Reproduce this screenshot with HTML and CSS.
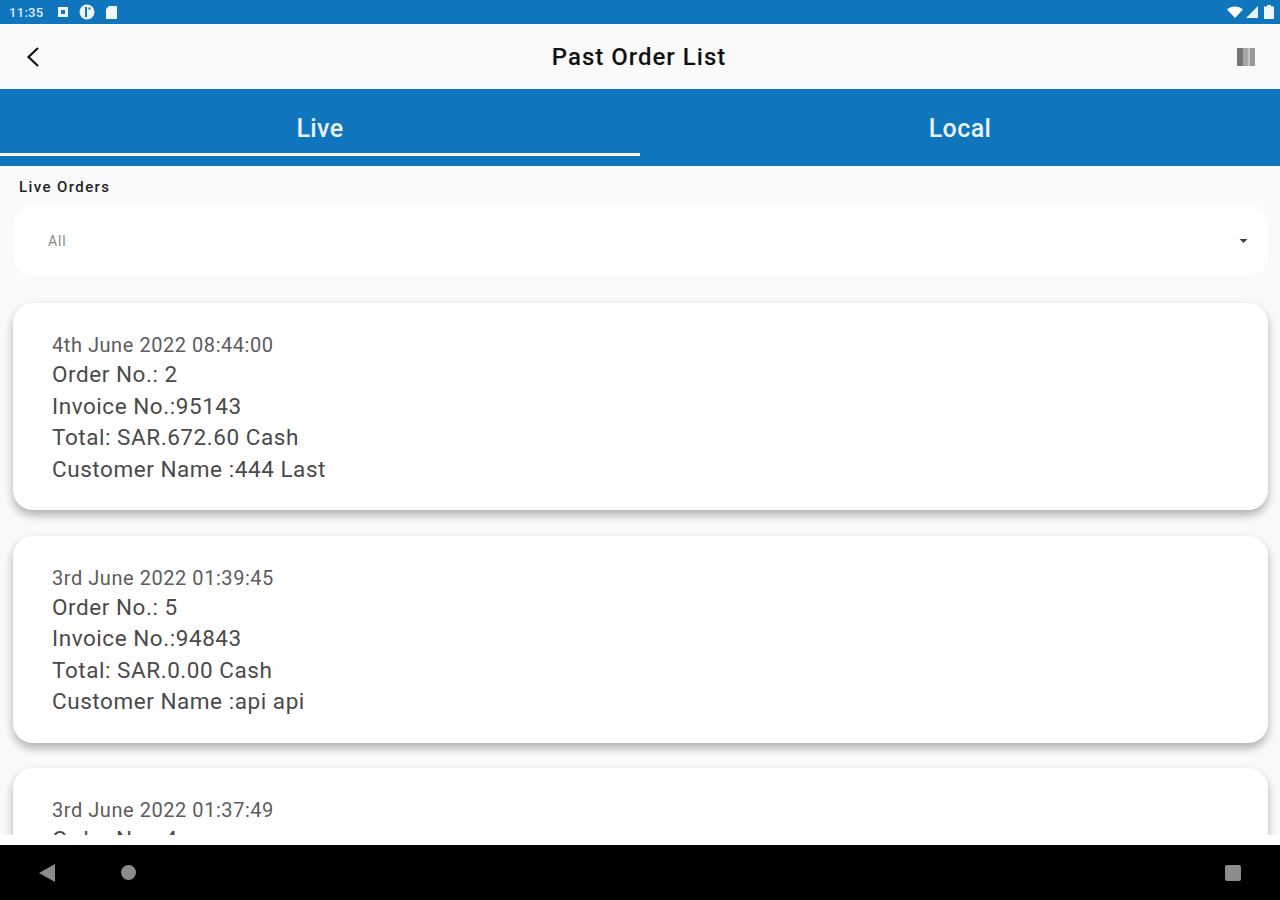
FILE: index.html
```html
<!DOCTYPE html>
<html lang="en">
<head>
    <meta charset="UTF-8">
    <meta name="viewport" content="width=device-width, initial-scale=1.0">
    <title>Past Order List</title>
    <link rel="stylesheet" href="styles.css">
</head>
<body>
    <div class="screen">
        <div class="status-bar">
            <div class="status-left">
                <span class="clock">11:35</span>
                <svg class="status-icon" width="12" height="12" viewBox="0 0 12 12"><path fill="#f0f5fa" fill-rule="evenodd" d="M1 1h10v10H1z M4 4v4h4V4z"/></svg>
                <svg class="status-icon" width="16" height="16" viewBox="0 0 16 16"><circle cx="8" cy="8" r="7.5" fill="#f0f5fa"/><path fill="#0f75bc" d="M6 3h2v10H6z M9.500 3.500h2v2h-2z"/></svg>
                <svg class="status-icon" width="13" height="15" viewBox="0 0 13 15"><path fill="#f0f5fa" d="M4 1h8v13H1V4z"/></svg>
            </div>
            <div class="status-right">
                <svg width="16" height="12" viewBox="0 0 16 12"><path fill="#fff" d="M0 3.500C4 -0.500 12 -0.500 16 3.500L8 12z"/></svg>
                <svg width="12" height="12" viewBox="0 0 12 12"><path fill="#e8f0f8" d="M12 0v12H0z"/></svg>
                <svg class="battery" width="10" height="14" viewBox="0 0 10 14"><path fill="#f0f5fa" d="M3 0h4v1.500h3V14H0V1.500h3z"/></svg>
            </div>
        </div>

        <div class="app-bar">
            <svg class="back" width="16" height="22" viewBox="0 0 16 22"><path fill="none" stroke="#111" stroke-width="2.200" d="M13 2L3.500 11l9.500 9"/></svg>
            <h1>Past Order List</h1>
            <svg class="barcode" width="18" height="18" viewBox="0 0 18 18">
                <path fill="#757575" d="M0 0h6v18H0z"/>
                <path fill="#a6a6a6" d="M6 0h5v18H6z"/>
                <path fill="#c4c4c4" d="M11 0h2v18h-2z"/>
                <path fill="#999" d="M13 0h5v18h-5z"/>
            </svg>
        </div>

        <div class="tabs">
            <div class="tab active">Live</div>
            <div class="tab">Local</div>
        </div>

        <div class="content">
            <div class="section-label">Live Orders</div>
            <div class="dropdown">
                <span>All</span>
                <svg width="9" height="4" viewBox="0 0 10 5"><path fill="#444" d="M0 0h10L5 5z"/></svg>
            </div>

            <div class="order-card">
                <div class="order-date">4th June 2022 08:44:00</div>
                <div class="order-line">Order No.: 2</div>
                <div class="order-line">Invoice No.:95143</div>
                <div class="order-line">Total: SAR.672.60 Cash</div>
                <div class="order-line">Customer Name :444 Last</div>
            </div>

            <div class="order-card">
                <div class="order-date">3rd June 2022 01:39:45</div>
                <div class="order-line">Order No.: 5</div>
                <div class="order-line">Invoice No.:94843</div>
                <div class="order-line">Total: SAR.0.00 Cash</div>
                <div class="order-line">Customer Name :api api</div>
            </div>

            <div class="order-card">
                <div class="order-date">3rd June 2022 01:37:49</div>
                <div class="order-line">Order No.: 4</div>
            </div>
        </div>

        <div class="bottom-gap"></div>

        <div class="nav-bar">
            <svg width="16" height="18" viewBox="0 0 16 18"><path fill="#8c8c8c" d="M16 0v18L0 9z"/></svg>
            <span class="nav-home"></span>
            <span class="nav-square"></span>
        </div>
    </div>
</body>
</html>
```

FILE: styles.css
```css
* {
    box-sizing: border-box;
}
body {
    margin: 0;
    font-family: Roboto, "Liberation Sans", sans-serif;
    background-color: #fafafa;
}
.screen {
    display: flex;
    flex-direction: column;
    height: 900px;
    overflow: hidden;
}
.status-bar {
    display: flex;
    justify-content: space-between;
    align-items: center;
    height: 24px;
    padding: 0 6px 0 9px;
    background-color: #0f75bc;
    flex-shrink: 0;
}
.status-left, .status-right {
    display: flex;
    align-items: center;
}
.status-right {
    gap: 3px;
}
.battery {
    margin-left: 3px;
}
.clock {
    width: 48px;
    font-size: 13px;
    font-weight: 500;
    letter-spacing: 0.3px;
    color: #dfeaf5;
}
.status-icon {
    margin-right: 10px;
}
.app-bar {
    display: flex;
    align-items: center;
    justify-content: space-between;
    height: 65px;
    padding: 0 25px;
    background-color: #fafafa;
    flex-shrink: 0;
}
.app-bar h1 {
    margin: 0;
    font-size: 24px;
    font-weight: 500;
    letter-spacing: 1px;
    color: #111;
}
.tabs {
    display: flex;
    height: 77px;
    background-color: #0f75bc;
    flex-shrink: 0;
}
.tab {
    flex: 1;
    height: 67px;
    padding-top: 24px;
    text-align: center;
    font-size: 25px;
    font-weight: 500;
    letter-spacing: 0.4px;
    line-height: 32px;
    color: #eaf2f9;
}
.tab.active {
    border-bottom: 3px solid #f4f8fc;
}
.content {
    flex: 1;
    min-height: 0;
    overflow: hidden;
    padding: 12px 12px 0 13px;
}
.section-label {
    padding-left: 6px;
    font-size: 15px;
    font-weight: 500;
    letter-spacing: 1.4px;
    line-height: 18px;
    color: #222;
}
.dropdown {
    display: flex;
    justify-content: space-between;
    align-items: center;
    height: 71px;
    margin: 9px 0 27px 1px;
    padding: 0 20px 0 34px;
    background-color: #fff;
    border-radius: 20px;
    font-size: 14px;
    letter-spacing: 0.8px;
    color: #8a8a8a;
}
.order-card {
    height: 207px;
    margin-bottom: 25.500px;
    padding: 28px 39px;
    background-color: #fff;
    border-radius: 20px;
    box-shadow: 0 5px 10px rgba(0, 0, 0, 0.3);
}
.order-date {
    font-size: 20px;
    letter-spacing: 0.55px;
    line-height: 28px;
    color: #5c5c5c;
}
.order-line {
    font-size: 22.500px;
    letter-spacing: 0.55px;
    line-height: 31.500px;
    color: #4a4a4a;
}
.bottom-gap {
    height: 10px;
    background-color: #fff;
    flex-shrink: 0;
}
.nav-bar {
    display: flex;
    align-items: center;
    height: 55px;
    padding: 0 39px;
    background-color: #000;
    flex-shrink: 0;
}
.nav-home {
    width: 15px;
    height: 15px;
    margin-left: 66px;
    border-radius: 50%;
    background-color: #8c8c8c;
}
.nav-square {
    width: 16px;
    height: 16px;
    margin-left: auto;
    border-radius: 2px;
    background-color: #8c8c8c;
}
```
